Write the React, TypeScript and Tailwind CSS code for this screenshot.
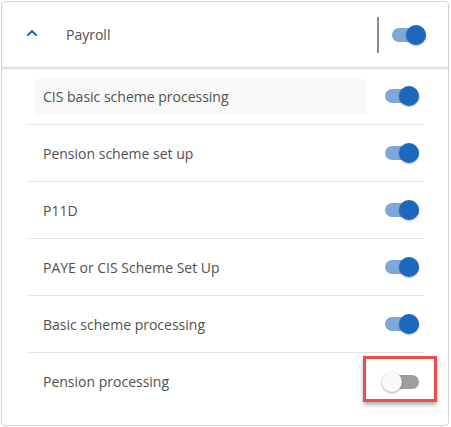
import { ChevronUp } from 'lucide-react'

const rows = [
  { label: 'CIS basic scheme processing', on: true, shaded: true },
  { label: 'Pension scheme set up', on: true },
  { label: 'P11D', on: true },
  { label: 'PAYE or CIS Scheme Set Up', on: true },
  { label: 'Basic scheme processing', on: true },
  { label: 'Pension processing', on: false, highlight: true },
]

function Toggle({ on }: { on: boolean }) {
  return (
    <div className="relative h-[20px] w-[37px]">
      <div
        className={
          on
            ? 'absolute left-[3px] top-[3px] h-[14px] w-[34px] rounded-full bg-[#7ea8da]'
            : 'absolute left-[3px] top-[3px] h-[14px] w-[34px] rounded-full bg-[#9e9e9e]'
        }
      />
      <div
        className={
          on
            ? 'absolute left-[17px] top-0 h-[20px] w-[20px] rounded-full bg-[#1c68bd] shadow-[0_1px_2px_rgba(0,0,0,0.3)]'
            : 'absolute left-0 top-0 h-[20px] w-[20px] rounded-full bg-[#fafafa] shadow-[0_1px_3px_rgba(0,0,0,0.35)]'
        }
      />
    </div>
  )
}

export default function App() {
  return (
    <div className="h-[427px] w-[451px] bg-white p-[1px]" style={{ fontFamily: '"Open Sans", "Noto Sans", sans-serif' }}>
      <div className="h-[425px] w-[448px] rounded-[4px] border border-[#d3d6da] bg-white">
        <div className="flex h-[65px] items-center rounded-t-[4px] shadow-[0_2px_2px_rgba(0,0,0,0.14)]">
          <ChevronUp size={16} strokeWidth={3} className="ml-[22px] mt-[-3px] text-[#1c68bd]" />
          <span className="ml-[26px] text-[14px] text-[#505050]">Payroll</span>
          <div className="ml-auto mr-[10px] h-[36px] w-[2px] bg-[#8a8a8a]" />
          <div className="mr-[22px]">
            <Toggle on />
          </div>
        </div>

        <div className="ml-[25px] mr-[24px] mt-[1px]">
          {rows.map((row, i) => (
            <div
              key={row.label}
              className={
                i < rows.length - 1
                  ? 'flex h-[57px] items-center border-b border-[#e4e4e4]'
                  : 'flex h-[57px] items-center'
              }
            >
              <div
                className={
                  row.shaded
                    ? 'ml-[8px] flex h-[35px] w-[332px] items-center rounded-[3px] bg-[#f8f8f8] px-[8px]'
                    : 'ml-[16px] flex h-[35px] items-center'
                }
              >
                <span className="text-[14px] text-[#505050]">{row.label}</span>
              </div>
              <div className="relative ml-auto mr-[5px]">
                {row.highlight && (
                  <div className="absolute left-[-19px] top-[-16px] h-[46px] w-[74px] border-[3px] border-[#ef4a4c] shadow-[0_3px_4px_rgba(0,0,0,0.3)]" />
                )}
                <Toggle on={row.on} />
              </div>
            </div>
          ))}
        </div>
      </div>
    </div>
  )
}
